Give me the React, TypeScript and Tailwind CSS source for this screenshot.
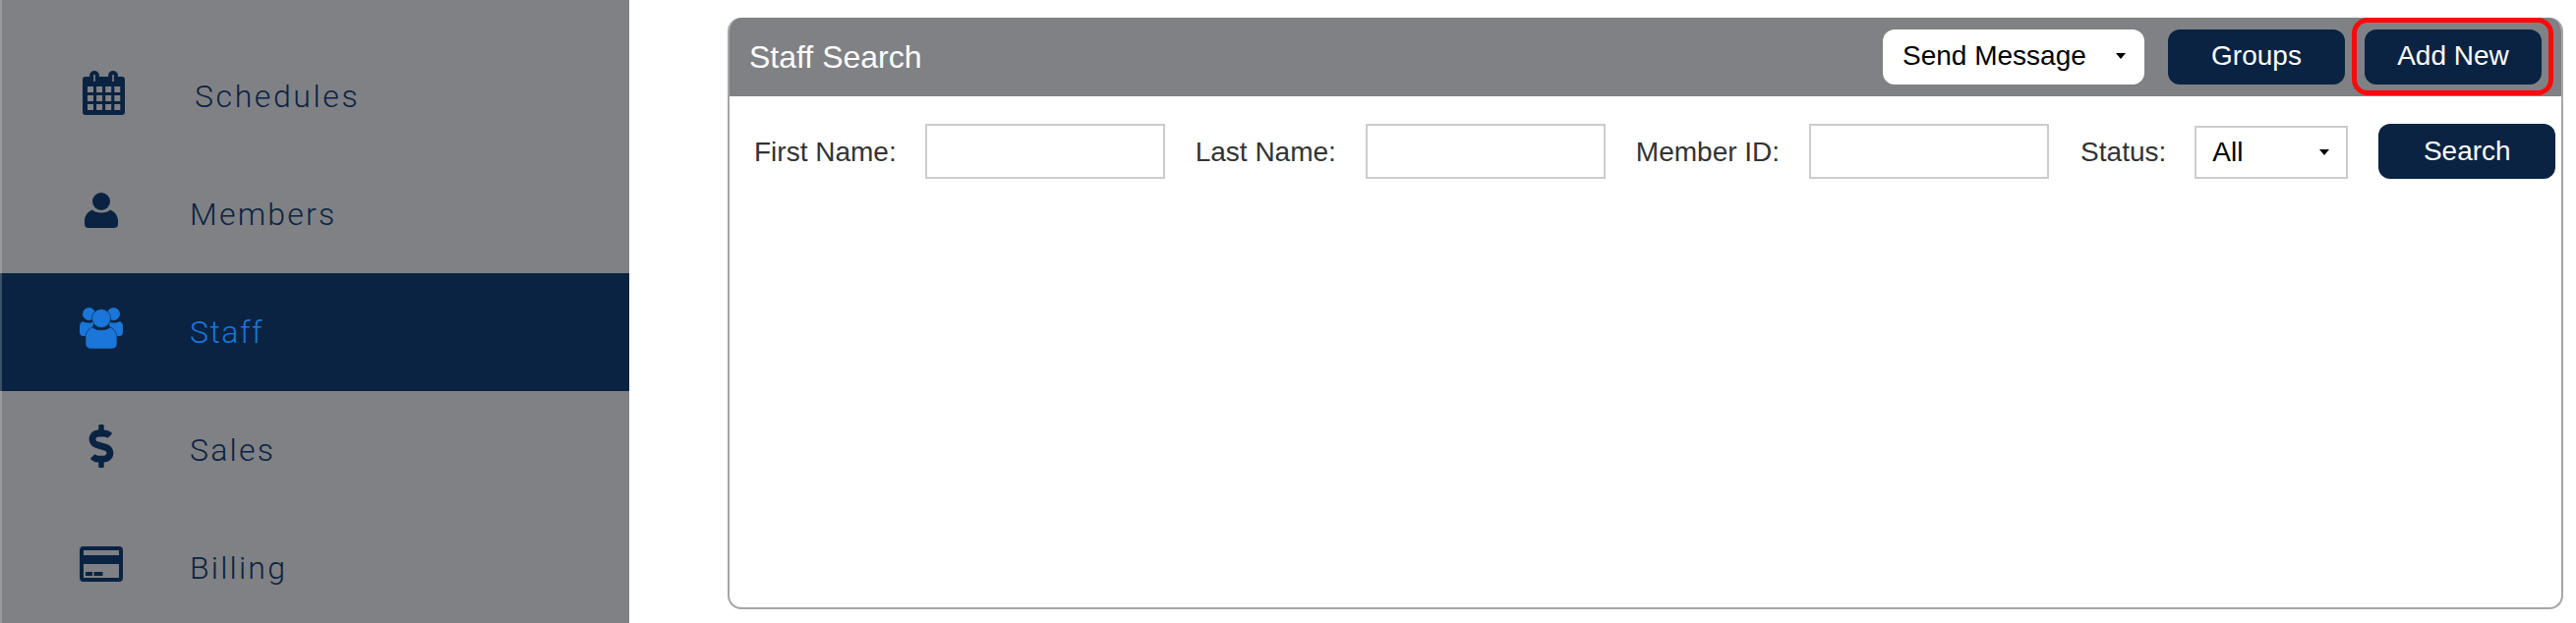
import type { ReactNode } from "react";
import { FaDollarSign } from "react-icons/fa";

type navItem = {
  id: number;
  name: string;
  icon: ReactNode;
  active?: boolean;
  labelClass: string;
};

function CalendarIcon() {
  const cells = [];
  for (let row = 0; row < 3; row++) {
    for (let col = 0; col < 4; col++) {
      cells.push(
        <rect key={`${row}-${col}`} x={5 + col * 9.1} y={17 + row * 9} width="6" height="6" fill="#808185" />
      );
    }
  }
  return (
    <svg viewBox="0 0 43 46" className="ml-[5px] w-[43px] h-[46px]">
      <circle cx="12" cy="6" r="5" fill="currentColor" />
      <circle cx="31" cy="6" r="5" fill="currentColor" />
      <rect y="7" width="43" height="39" rx="3" fill="currentColor" />
      <rect x="11.200" y="5" width="1.600" height="7" fill="#808185" />
      <rect x="30.200" y="5" width="1.600" height="7" fill="#808185" />
      {cells}
    </svg>
  );
}

function PersonIcon() {
  return (
    <svg viewBox="0 0 34 36" className="w-[34px] h-[36px]" fill="currentColor">
      <circle cx="17" cy="9" r="9" />
      <path d="M8 17.500c2 2.200 5.500 3 9 3s7-.8 9-3c4.500 1.500 8 6 8 11V32a4 4 0 0 1-4 4H4a4 4 0 0 1-4-4v-3.500c0-5 3.500-9.500 8-11z" />
    </svg>
  );
}

function StaffIcon() {
  return (
    <svg viewBox="0 0 44 42" className="w-[44px] h-[42px]" fill="currentColor">
      <circle cx="9.500" cy="6.500" r="6.500" />
      <circle cx="34.500" cy="6.500" r="6.500" />
      <path d="M3 14c2 1 4 1.500 6.500 1.500 2 0 4-.3 5.500-1.200L10 29H4a4 4 0 0 1-4-4v-6c0-2 1-4 3-5z" />
      <path d="M41 14c-2 1-4 1.500-6.500 1.500-2 0-4-.3-5.500-1.200L34 29h6a4 4 0 0 0 4-4v-6c0-2-1-4-3-5z" />
      <circle cx="22" cy="11" r="9.500" stroke="#0a2342" strokeWidth="0.6" />
      <path d="M13 20c2.500 2 5.500 2.800 9 2.800s6.500-.8 9-2.800c4.500 1.500 7 6 7 11v6a5 5 0 0 1-5 5H11a5 5 0 0 1-5-5v-6c0-5 2.500-9.500 7-11z" stroke="#0a2342" strokeWidth="0.6" />
    </svg>
  );
}

function CardIcon() {
  return (
    <svg viewBox="0 0 44 36" className="w-[44px] h-[36px]">
      <rect width="44" height="36" rx="4" fill="currentColor" />
      <rect x="4" y="4" width="36" height="5" fill="#808185" />
      <rect x="4" y="18" width="36" height="14" fill="#808185" />
      <rect x="6" y="26" width="7" height="4" fill="currentColor" />
      <rect x="14.500" y="26" width="9" height="4" fill="currentColor" />
    </svg>
  );
}

function Caret() {
  return (
    <span className="w-0 h-0 border-x-[5.500px] border-x-transparent border-t-[6px] border-t-black" />
  );
}

const items: navItem[] = [
  { id: 1, name: "Schedules", icon: <CalendarIcon />, labelClass: "ml-[70px] tracking-[2.600px]" },
  { id: 2, name: "Members", icon: <PersonIcon />, labelClass: "ml-[65px] tracking-[2.200px]" },
  { id: 3, name: "Staff", icon: <StaffIcon />, active: true, labelClass: "ml-[65px] tracking-[1.500px]" },
  { id: 4, name: "Sales", icon: <FaDollarSign className="w-[44px] h-[44px]" />, labelClass: "ml-[65px] tracking-[2.200px]" },
  { id: 5, name: "Billing", icon: <CardIcon />, labelClass: "ml-[65px] tracking-[2.200px]" },
];

const fields = [
  { label: "First Name:", labelGap: "mr-[29px]", gap: "mr-[31px]" },
  { label: "Last Name:", labelGap: "mr-[30px]", gap: "mr-[31px]" },
  { label: "Member ID:", labelGap: "mr-[30px]", gap: "mr-[32px]" },
];

export default function App(): JSX.Element {
  return (
    <div className="flex h-screen w-full overflow-hidden bg-white font-['Liberation_Sans',sans-serif]">
      <aside className="relative w-[640px] shrink-0 bg-[#808185] pt-[38px]">
        <div className="absolute inset-y-0 left-0 w-[2px] bg-white/20"></div>
        {items.map((item) => (
          <div
            key={item.id}
            className={`flex h-[120px] items-center pl-[78px] ${
              item.active ? "bg-[#0a2342] text-[#1a76d8]" : "text-[#0a2342]"
            }`}
          >
            <span className="flex w-[50px] -mt-[8px] justify-center">{item.icon}</span>
            <span className={`${item.labelClass} -mt-[1px] font-['Roboto',sans-serif] text-[32px] font-light`}>
              {item.name}
            </span>
          </div>
        ))}
      </aside>

      <main className="pl-[100px] pt-[18px]">
        <section className="flex h-[602px] w-[1867px] flex-col overflow-hidden rounded-[14px] border-2 border-t-0 border-[#a6a6a6]">
          <header className="flex h-[80px] shrink-0 items-center bg-[#808185] pl-[20px] text-white">
            <h1 className="text-[32px] font-normal">Staff Search</h1>
            <button className="ml-auto flex h-[56px] w-[266px] items-center rounded-[12px] bg-white pb-[2px] pl-[20px] text-[28px] text-black">
              Send Message
              <span className="ml-[30px] flex"><Caret /></span>
            </button>
            <button className="ml-[24px] h-[56px] w-[180px] rounded-[12px] bg-[#0a2342] pb-[2px] text-[28px] text-white">
              Groups
            </button>
            <div className="relative ml-[20px] mr-[20px]">
              <button className="block h-[56px] w-[180px] rounded-[12px] bg-[#0a2342] pb-[2px] text-[28px] text-white">
                Add New
              </button>
              <div className="absolute -left-[13px] -right-[12px] -bottom-[11px] -top-[12px] rounded-[16px] border-[5px] border-[#fb0a0a]"></div>
            </div>
          </header>

          <div className="flex items-center pl-[25px] pt-[28px] text-[28px] text-[#333333]">
            {fields.map((field) => (
              <div key={field.label} className={`flex items-center ${field.gap}`}>
                <label className={`${field.labelGap} pt-[2px]`}>{field.label}</label>
                <input className="h-[56px] w-[244px] border-2 border-[#cccccc] bg-white" />
              </div>
            ))}
            <label className="mr-[29px] pt-[2px]">Status:</label>
            <div className="mt-[2px] flex h-[54px] w-[156px] items-center justify-between border-2 border-[#cccccc] pl-[16px] pr-[17px] text-black">
              All
              <Caret />
            </div>
            <button className="ml-[31px] h-[56px] w-[180px] rounded-[12px] bg-[#0a2342] text-white">
              Search
            </button>
          </div>
        </section>
      </main>
    </div>
  );
}
